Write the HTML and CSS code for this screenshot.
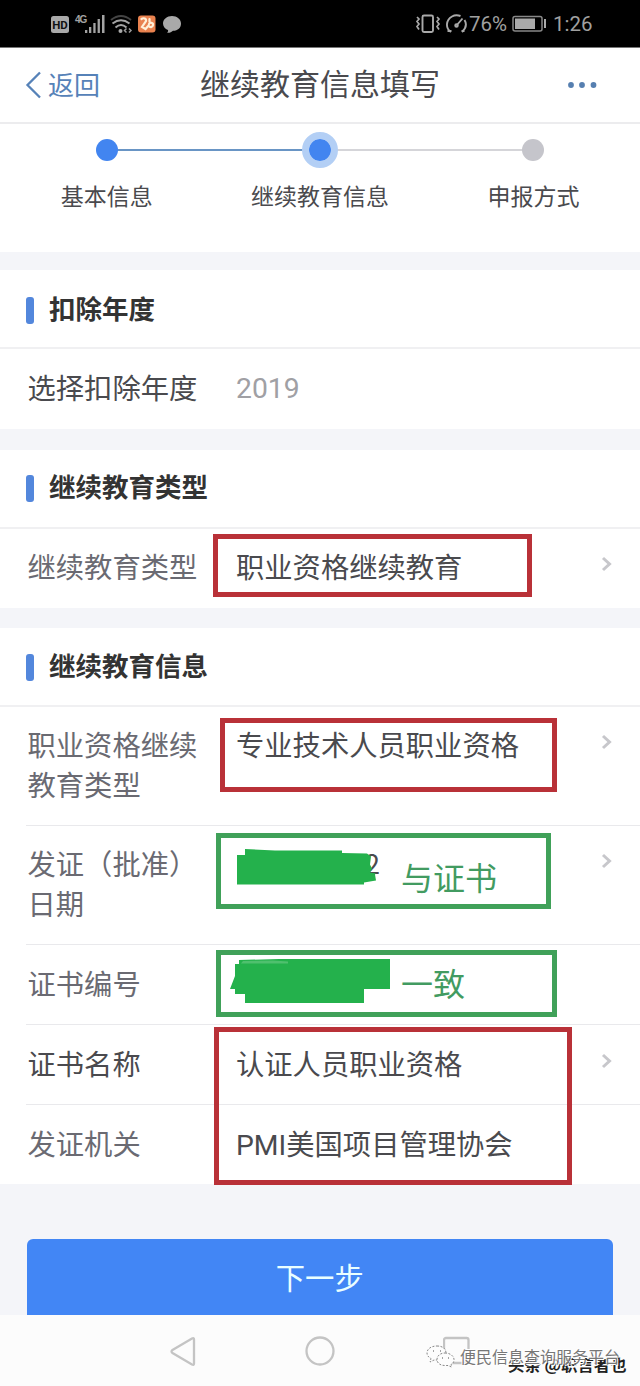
FILE: index.html
```html
<!DOCTYPE html>
<html lang="zh-CN">
<head>
<meta charset="utf-8">
<title>继续教育信息填写</title>
<link rel="stylesheet" href="styles.css">
</head>
<body>
<div class="screen">
  <div class="status">
    <svg class="status-left" width="134" height="26" viewBox="50 11 134 26">
      <rect x="51" y="16" width="18" height="17" rx="2.5" fill="#a9a9a9"/>
      <text class="hd" x="60" y="28.5" text-anchor="middle">HD</text>
      <text class="net" x="75" y="23">4G</text>
      <g fill="#a3a3a3"><rect x="85" y="30" width="2.3" height="3"/><rect x="89" y="27" width="2.3" height="6"/><rect x="93.300" y="23" width="2.3" height="10"/><rect x="97.600" y="19" width="2.3" height="14"/><rect x="102" y="15" width="2.5" height="18"/></g>
      <g fill="none" stroke="#a3a3a3" stroke-width="2"><path stroke="#444" d="M111 20Q121 12 131 20"/><path d="M112.500 23.500Q121 17 129.500 23.500M115.500 27.500Q121 22.500 126.500 27.500"/></g>
      <circle cx="120.500" cy="31" r="2" fill="#aaa"/>
      <path d="M126.500 28.500l-2 2 2 2M129 28.500l2 2-2 2" fill="none" stroke="#999" stroke-width="1.500"/>
      <rect x="138" y="15.500" width="17.500" height="17" rx="3" fill="#e9824f"/>
      <path d="M141.500 19c2-1.500 5-.5 4.500 2l-4 6 3.500 2 3-3.500c1.500 2.500 4 2 4.500-.5s-3-3-4-1M149.500 19v3" fill="none" stroke="#fff0d8" stroke-width="2.200" stroke-linecap="round"/>
      <path d="M172 16c5 0 9 3.200 9 7.500s-3 7.300-8 7.300c-1.500 1.500-3.500 2.300-6 2 1-.8 1.200-1.800 1-2.800-3-1.200-5-3.500-5-6.500 0-4.300 4-7.500 9-7.500z" fill="#a9a9a9"/>
    </svg>
    <div class="status-right">
      <svg width="54" height="24" viewBox="416 12 54 24" fill="none" stroke="#a9a9a9" stroke-width="1.900">
        <rect x="423.500" y="15.500" width="10.500" height="16.500" rx="1.500"/>
        <path stroke-width="1.700" d="M418 17l2 2-2 2.500 2 2.500-2 2.500 2 3M438 17l2 2-2 2.500 2 2.500-2 2.500 2 3"/>
        <path d="M452 32c-6-4-5-12 1-15.500 3-1.800 6-1.500 8.500-.5M465.500 20c2.500 4 1.700 8-2.500 12M448.500 31h4M462.500 31h3M463.500 18.500l-6 7"/>
        <circle cx="457.500" cy="25.500" r="1.300"/>
      </svg>
      <span class="percent">76%</span>
      <svg width="36" height="18" viewBox="513 15 36 18"><rect x="514" y="16.500" width="29" height="14.500" rx="2" fill="none" stroke="#888" stroke-width="1.500"/><rect x="516" y="18.500" width="20" height="10.500" fill="#aaa"/><path d="M546 19v9" stroke="#aaa" stroke-width="2"/></svg>
      <span class="clock">1:26</span>
    </div>
  </div>

  <header class="nav">
    <a class="back"><svg width="18" height="28" viewBox="0 0 18 28"><path d="M15 1.500L2.500 14 15 26.500" fill="none" stroke="#5682b8" stroke-width="2.300"/></svg><span>返回</span></a>
    <h1>继续教育信息填写</h1>
    <svg class="more" width="30" height="8" viewBox="0 0 30 8" fill="#567fb0"><circle cx="4" cy="4" r="2.900"/><circle cx="15" cy="4" r="2.900"/><circle cx="26.500" cy="4" r="2.900"/></svg>
  </header>

  <div class="steps">
    <div class="step done"><i></i><span>基本信息</span></div>
    <div class="step current"><i></i><span>继续教育信息</span></div>
    <div class="step"><i></i><span>申报方式</span></div>
  </div>

  <section class="group year">
    <h2>扣除年度</h2>
    <div class="row"><span class="label dark">选择扣除年度</span><span class="value muted">2019</span></div>
  </section>

  <section class="group type">
    <h2>继续教育类型</h2>
    <div class="row"><span class="label">继续教育类型</span><span class="value">职业资格继续教育</span><svg class="arrow" width="12" height="16" viewBox="0 0 12 16"><path d="M2 2l6.500 6L2 14"/></svg></div>
  </section>

  <section class="group info">
    <h2>继续教育信息</h2>
    <div class="row tall"><span class="label">职业资格继续<br>教育类型</span><span class="value">专业技术人员职业资格</span><svg class="arrow" width="12" height="16" viewBox="0 0 12 16"><path d="M2 2l6.500 6L2 14"/></svg></div>
    <div class="row tall"><span class="label">发证（批准）<br>日期</span><span class="value date">2</span><svg class="arrow" width="12" height="16" viewBox="0 0 12 16"><path d="M2 2l6.500 6L2 14"/></svg></div>
    <div class="row"><span class="label">证书编号</span><span class="value"></span></div>
    <div class="row"><span class="label dark">证书名称</span><span class="value">认证人员职业资格</span><svg class="arrow" width="12" height="16" viewBox="0 0 12 16"><path d="M2 2l6.500 6L2 14"/></svg></div>
    <div class="row"><span class="label">发证机关</span><span class="value latin">PMI美国项目管理协会</span></div>
  </section>

  <div class="action"><button class="next">下一步</button></div>

  <footer class="keys">
    <svg width="28" height="32" viewBox="169 1334 28 32"><path d="M192 1337.500q2-1 2 1v24q0 2-2 1l-19.500-11.500q-2-1.500 0-3z"/></svg>
    <svg width="32" height="32" viewBox="0 0 32 32"><circle cx="16" cy="16" r="13.500"/></svg>
    <svg width="28" height="32" viewBox="0 0 28 32"><rect x="1" y="3" width="24.500" height="25" rx="2"/></svg>
  </footer>

  <div class="mark red mark-type"></div>
  <div class="mark red mark-qualification"></div>
  <div class="mark green mark-date"></div>
  <div class="mark green mark-number"></div>
  <div class="mark red mark-authority"></div>
  <svg class="redaction" width="170" height="160" viewBox="225 845 170 160" fill="#24b14c">
    <path d="M237 855h8v-6l30 1.500h67v2.500l25 .5 4 3-1 8 2 4-2 4 6 1-1 1 1 6-12 2v2H237z"/>
    <path d="M239 960l40-1 111 0v30h-26v14H245v-9h-10v-5h-5l5-13v-12h4z"/>
    <path d="M243 961l30-.5 15 1v2h-47z" fill="#4fc06e"/>
  </svg>
  <span class="note note-top">与证书</span>
  <span class="note note-bottom">一致</span>

  <span class="credit author">头条 @职言者也</span>
  <svg class="wechat" width="30" height="26" viewBox="0 0 30 26" fill="#fdfdfd" stroke="#888" stroke-width="1" stroke-dasharray="2 1.500">
    <path d="M11 3c6 0 9 3 9 7s-4 7-9 7l-3 0-4 2 1-3.500C2 14 1 12 1 10c0-4 4-7 10-7z"/><path d="M19 10c5 0 9 3 9 6.500 0 2.500-1 4-3 5l.5 2.500-3.500-1.500h-3c-5 0-8-2.500-8-6s3-6.500 8-6.500z"/><path stroke-dasharray="none" stroke-width="1.500" d="M7 8h1M14 8h1M16 15h1M22 15h1"/>
  </svg>
  <span class="credit account">便民信息查询服务平台</span>
</div>
</body>
</html>
```

FILE: styles.css
```css
* { box-sizing: border-box; }
body { margin: 0; font-family: "Noto Sans CJK SC", sans-serif; color: #4a4a4e; background: #f4f5f9; }
h1, h2 { margin: 0; }
.screen { position: relative; width: 640px; height: 1386px; overflow: hidden; display: flex; flex-direction: column; }

.status { height: 48px; flex: none; background: #000; display: flex; justify-content: space-between; padding: 0 47px 0 50px; color: #a0a0a0; font: 20.5px/48px Roboto, sans-serif; border-bottom: 1px solid #777; }
.status-left { margin-top: 11px; }
.status-right { display: flex; align-items: center; }
.status-right span { padding-top: 1px; }
.percent { width: 43px; }
.clock { margin-left: 5px; width: 40px; }
.hd { font: bold 11.5px Roboto, sans-serif; fill: #111; }
.net { font: bold 10px "Liberation Sans", sans-serif; fill: #a3a3a3; letter-spacing: -1px; }

.nav { height: 76px; flex: none; background: #fff; border-bottom: 2px solid #ececee; display: grid; grid-template-columns: 120px 1fr 120px; align-items: center; }
.back { display: flex; align-items: center; gap: 5px; padding-left: 25px; color: #5682b8; font-size: 26px; line-height: 38px; }
.back span { padding-bottom: 2px; }
.nav h1 { font-size: 30px; font-weight: 400; line-height: 44px; text-align: center; padding-bottom: 7px; }
.more { margin-left: 47px; }

.steps { height: 128px; flex: none; background: #fff; display: grid; grid-template-columns: repeat(3, 213.400px); }
.step { display: flex; flex-direction: column; align-items: center; position: relative; font-size: 23px; line-height: 32px; padding-top: 8px; }
.step i { width: 36px; height: 36px; border: 7px solid transparent; border-radius: 50%; background: #c5c5cb; background-clip: padding-box; z-index: 1; }
.step span { margin-top: 11px; white-space: nowrap; }
.step:not(:last-child)::after { content: ""; position: absolute; left: 50%; top: 25px; width: 100%; height: 2px; background: #d5d5d9; }
.step.done i, .step.current i { background-color: #4285f0; }
.step.current i { border-color: #b3cff5; background-clip: border-box; background-color: #b3cff5; box-shadow: inset 0 0 0 11px #4285f0; }
.step.done:not(:last-child)::after { background: #6995c5; }

.group { flex: none; background: #fff; }
.year { margin-top: 18px; }
.type { margin-top: 21px; }
.info { margin-top: 20px; }
.group h2 { height: 79px; border-bottom: 2px solid #f0f0f2; display: flex; align-items: flex-start; gap: 15px; padding: 18px 0 0 26px; font-size: 26.500px; line-height: 40px; color: #333; }
.group h2::before { content: ""; width: 8px; height: 27px; border-radius: 3px; background: #5387dc; margin-top: 9px; }
.type h2 { padding-top: 16px; }
.info h2 { padding-top: 17px; }
.row { height: 80px; display: flex; align-items: flex-start; margin-left: 26px; padding: 18px 27px 0 1.500px; font-size: 28.300px; line-height: 40px; border-bottom: 1px solid #e9e9ec; }
.row:last-child { border-bottom: 0; }
.type .row, .info .row:last-child { height: 79px; }
.type .row { padding-top: 17px; }
.row.tall { height: 119px; padding-top: 17px; }
.label { width: 208.500px; flex: none; color: #6a6a72; white-space: nowrap; }
.label.dark { color: #4a4a4e; }
.value { flex: 1; white-space: nowrap; }
.latin { font-family: Roboto, "Noto Sans CJK SC", sans-serif; padding-top: 3px; }
.muted { color: #a0a0a4; font-family: Roboto, sans-serif; padding-top: 2px; }
.value.date { padding-left: 129px; font-size: 27px; }
.arrow { margin-top: 10px; fill: none; stroke: #c7c7cb; stroke-width: 3; }

.action { height: 131px; flex: none; padding: 55px 27px 0 26.500px; }
.next { display: block; width: 100%; height: 76px; border: 0; border-radius: 6px 6px 0 0; background: #4286f5; color: #eaffff; font: 29.300px/40px "Noto Sans CJK SC", sans-serif; padding: 0 0 3px; }
.keys { height: 71px; flex: none; background: #fcfcfc; display: flex; justify-content: center; align-items: center; gap: 107px; }
.keys svg { fill: none; stroke: #c4c4c4; stroke-width: 2.300; }

.mark { position: absolute; border: 5px solid; }
.red { border-color: #b93138; }
.green { border-color: #40a159; }
.mark-type { left: 213px; top: 534px; width: 319px; height: 63px; }
.mark-qualification { left: 220px; top: 718px; width: 337px; height: 74px; }
.mark-date { left: 216px; top: 833px; width: 335px; height: 76px; }
.mark-number { left: 216px; top: 950px; width: 341px; height: 67px; }
.mark-authority { left: 214px; top: 1027px; width: 358px; height: 158px; }
.redaction { position: absolute; left: 225px; top: 845px; }
.note { position: absolute; left: 401px; color: #429b61; font-size: 32px; line-height: 40px; }
.note-top { top: 856px; }
.note-bottom { top: 962px; }
.credit { position: absolute; font-size: 16px; line-height: 20px; white-space: nowrap; }
.author { left: 508px; top: 1354px; font-size: 16.400px; font-weight: 700; color: #222; }
.account { left: 460px; top: 1346px; color: #777; text-shadow: 1px 1px 0 #fff, -1px -1px 0 #fff; }
.wechat { position: absolute; left: 426px; top: 1343px; }
```
